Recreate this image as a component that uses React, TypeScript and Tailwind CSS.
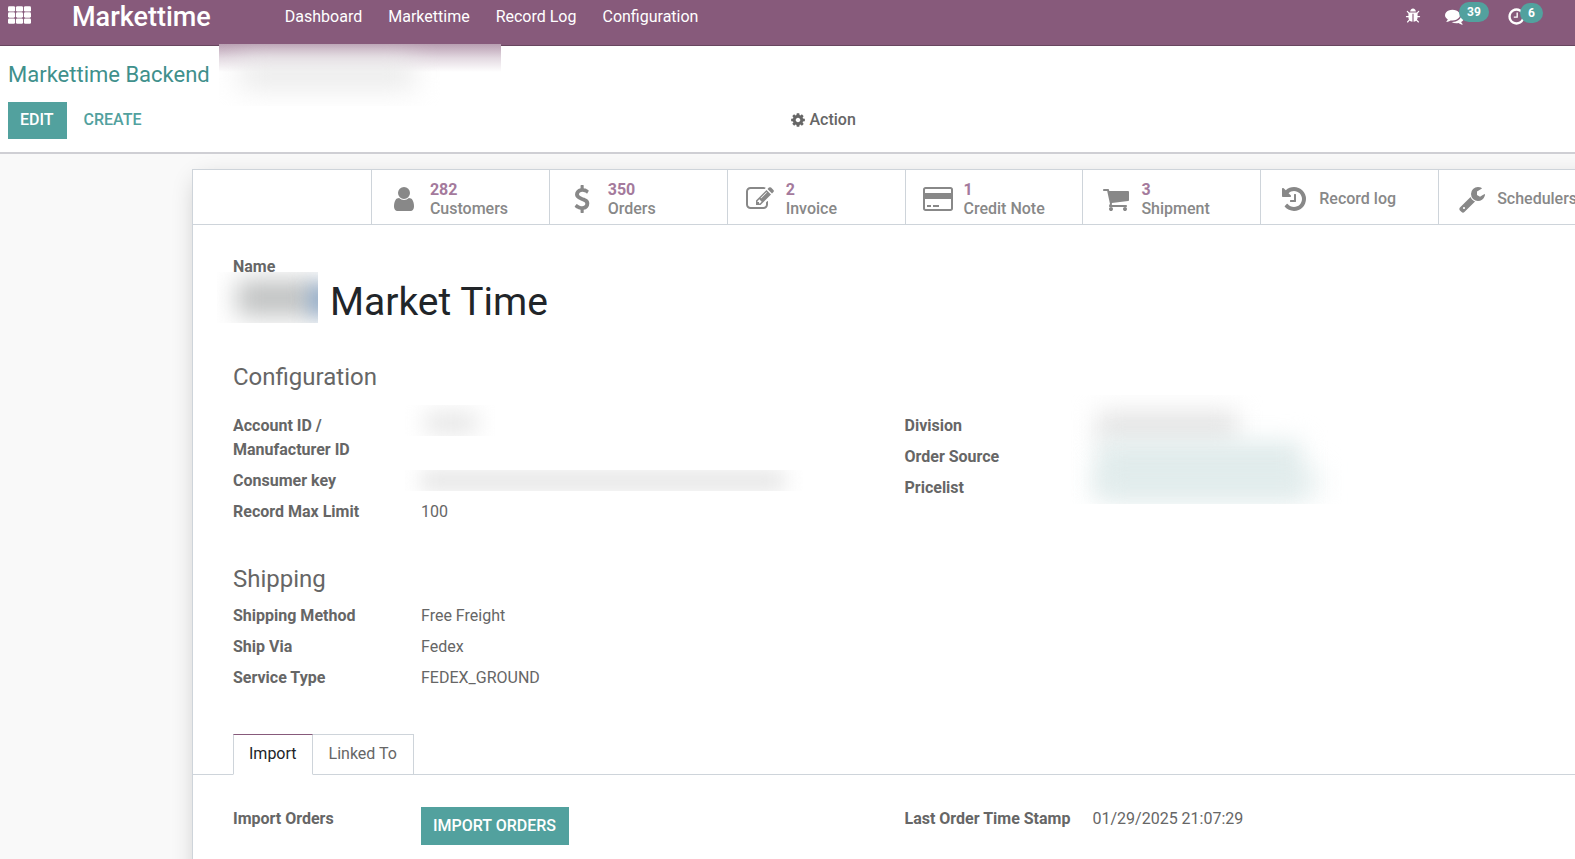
import type { ReactNode } from "react";

const ICONS = {
  user: "M1536 1399q0 109-62.5 187t-150.5 78h-854q-88 0-150.5-78t-62.5-187q0-85 8.5-160.5t31.5-152 58.5-131 94-89 134.5-34.5q131 128 313 128t313-128q76 0 134.5 34.5t94 89 58.5 131 31.5 152 8.5 160.5zm-256-887q0 159-112.5 271.5t-271.5 112.5-271.5-112.5-112.5-271.5 112.5-271.5 271.5-112.5 271.5 112.5 112.5 271.5z",
  usd: "M1362 1185q0 153-99.5 263.5t-258.5 136.5v175q0 14-9 23t-23 9h-135q-13 0-22.5-9.5t-9.5-22.5v-175q-66-9-127.5-31t-101.5-44.5-74-48-46.5-37.5-17.5-18q-17-21-2-41l103-135q7-10 23-12 15-2 24 9l2 2q113 99 243 125 37 8 74 8 81 0 142.5-43t61.5-122q0-28-15-53t-33.5-42-58.5-37.5-66-32-80-32.5q-39-16-61.5-25t-61.5-26.5-62.5-31-56.5-35.5-53.5-42.5-43.5-49-35.5-58-21-66.5-8.5-78q0-138 98-242t255-134v-180q0-13 9.5-22.5t22.5-9.5h135q14 0 23 9t9 23v176q57 6 110.5 23t87 33.5 63.5 37.5 39 29 15 14q17 18 5 38l-81 146q-8 15-23 16-14 3-27-7-3-3-14.5-12t-39-26.5-58.5-32-74.5-26-85.5-11.5q-95 0-155 43t-60 111q0 26 8.5 48t29.5 41.5 39.5 33 56 31 60.5 27 70 27.5q53 20 81 31.5t76 35 75.5 42.5 62 50 53 63.5 31.5 76.5 13 94z",
  edit: "M888 1184l116-116-152-152-116 116v56h96v96h56zm440-720q-16-16-33 1l-350 350q-17 17-1 33t33-1l350-350q17-17 1-33zm80 594v190q0 119-84.5 203.5t-203.5 84.5h-832q-119 0-203.5-84.5t-84.5-203.5v-832q0-119 84.5-203.5t203.5-84.5h832q63 0 117 25 15 7 18 23 3 17-9 29l-49 49q-14 14-32 8-23-6-45-6h-832q-66 0-113 47t-47 113v832q0 66 47 113t113 47h832q66 0 113-47t47-113v-126q0-13 9-22l64-64q15-15 35-7t20 29zm-96-738l288 288-672 672h-288v-288zm444 132l-92 92-288-288 92-92q28-28 68-28t68 28l152 152q28 28 28 68t-28 68z",
  card: "M1760 128q66 0 113 47t47 113v1216q0 66-47 113t-113 47h-1600q-66 0-113-47t-47-113v-1216q0-66 47-113t113-47h1600zm-1600 128q-13 0-22.5 9.5t-9.5 22.5v224h1664v-224q0-13-9.5-22.5t-22.5-9.5h-1600zm1600 1280q13 0 22.5-9.5t9.5-22.5v-608h-1664v608q0 13 9.5 22.5t22.5 9.5h1600zm-1504-128v-128h256v128h-256zm384 0v-128h384v128h-384z",
  cart: "M704 1536q0 52-38 90t-90 38-90-38-38-90 38-90 90-38 90 38 38 90zm896 0q0 52-38 90t-90 38-90-38-38-90 38-90 90-38 90 38 38 90zm128-1088v512q0 24-16.5 42.5t-40.5 21.5l-1044 122q13 60 13 70 0 16-24 64h920q26 0 45 19t19 45-19 45-45 19h-1024q-26 0-45-19t-19-45q0-11 8-31.5t16-36 21.5-40 15.5-29.5l-177-823h-204q-26 0-45-19t-19-45 19-45 45-19h256q16 0 28.5 6.5t19.5 15.5 13 24.5 8 26 5.5 29.5 4.5 26h1201q26 0 45 19t19 45z",
  history: "M1664 896q0 156-61 298t-164 245-245 164-298 61q-172 0-327-72.5t-264-204.5q-7-10-6.5-22.5t8.5-20.5l137-138q10-9 25-9 16 2 23 12 73 95 179 147t225 52q104 0 198.5-40.5t163.5-109.5 109.5-163.5 40.5-198.5-40.5-198.5-109.5-163.5-163.5-109.5-198.5-40.5q-98 0-188 35.5t-160 101.5l137 138q31 30 14 69-17 40-59 40h-448q-26 0-45-19t-19-45v-448q0-42 40-59 39-17 69 14l130 129q107-101 244.5-156.5t284.5-55.5q156 0 298 61t245 164 164 245 61 298zm-640-288v448q0 14-9 23t-23 9h-320q-14 0-23-9t-9-23v-64q0-14 9-23t23-9h224v-352q0-14 9-23t23-9h64q14 0 23 9t9 23z",
  wrench: "M448 1472q0-26-19-45t-45-19-45 19-19 45 19 45 45 19 45-19 19-45zm644-420l-682 682q-37 37-90 37-52 0-91-37l-106-108q-38-36-38-90 0-53 38-91l681-681q39 98 114.5 173.5t173.5 114.5zm634-435q0 39-23 106-47 134-164.5 217.5t-258.5 83.5q-185 0-316.5-131.5t-131.5-316.5 131.5-316.5 316.5-131.5q58 0 121.5 16.5t107.5 46.5q16 11 16 28t-16 28l-293 169v224l193 107q5-3 79-48.5t135.5-81 70.5-35.5q15 0 23.5 10t8.5 25z",
  bug: "M1696 960q0 26-19 45t-45 19h-224q0 171-67 290l208 209q19 19 19 45t-19 45q-18 19-45 19t-45-19l-198-197q-5 5-15 13t-42 28.5-65 36.5-82 29-97 13v-896h-128v896q-51 0-101.5-13.5t-87-33-66-39-43.5-32.5l-15-14-183 207q-20 21-48 21-24 0-43-16-19-18-20.5-44.5t15.5-46.5l202-227q-58-114-58-274h-224q-26 0-45-19t-19-45 19-45 45-19h224v-294l-173-173q-19-19-19-45t19-45 45-19 45 19l173 173h844l173-173q19-19 45-19t45 19 19 45-19 45l-173 173v294h224q26 0 45 19t19 45zm-480-576h-640q0-133 93.5-226.5t226.5-93.5 226.5 93.5 93.5 226.5z",
  comments: "M1408 768q0 139-94 257t-256.5 186.5-353.5 68.5q-86 0-176-16-124 88-278 128-36 9-86 16h-3q-11 0-20.5-8t-11.5-21q-1-3-1-6.5t.5-6.5 2-6l2.5-5 3.5-5.5 4-5 4.5-5 4-4.5q5-6 23-25t26-29.5 22.5-29 25-38.5 20.5-44q-124-72-195-177t-71-224q0-139 94-257t256.5-186.5 353.5-68.5 353.5 68.5 256.5 186.5 94 257zm384 256q0 120-71 224.5t-195 176.5q10 24 20.5 44t25 38.5 22.5 29 26 29.5 23 25q1 1 4 4.5t4.5 5 4 5 3.5 5.5l2.5 5 2 6 .5 6.5-1 6.5q-3 14-13 22t-22 7q-50-7-86-16-154-40-278-128-90 16-176 16-271 0-472-132 58 4 88 4 161 0 309-45t264-129q125-92 192-212t67-254q0-77-23-152 129 71 204 178t75 230z",
  clock: "M1024 544v448q0 14-9 23t-23 9h-320q-14 0-23-9t-9-23v-64q0-14 9-23t23-9h224v-352q0-14 9-23t23-9h64q14 0 23 9t9 23zm416 352q0-148-73-273t-198-198-273-73-273 73-198 198-73 273 73 273 198 198 273 73 273-73 198-198 73-273zm224 0q0 209-103 385.5t-279.5 279.5-385.5 103-385.5-103-279.5-279.5-103-385.5 103-385.5 279.5-279.5 385.5-103 385.5 103 279.5 279.5 103 385.5z",
  cog: "M1152 896q0-106-75-181t-181-75-181 75-75 181 75 181 181 75 181-75 75-181zm512-109v222q0 12-8 23t-20 13l-185 28q-19 54-39 91 35 50 107 138 10 12 10 25t-9 23q-27 37-99 108t-94 71q-12 0-26-9l-138-108q-44 23-91 38-16 136-29 186-7 28-36 28h-222q-14 0-24.5-8.5t-11.5-21.5l-28-184q-49-16-90-37l-141 107q-10 9-25 9-14 0-25-11-126-114-165-168-7-10-7-23 0-12 8-23 15-21 51-66.5t54-70.5q-27-50-41-99l-183-27q-13-2-21-12.5t-8-23.5v-222q0-12 8-23t19-13l186-28q14-46 39-92-40-57-107-138-10-12-10-24 0-10 9-23 26-36 98.5-107.5t94.5-71.5q13 0 26 10l138 107q44-23 91-38 16-136 29-186 7-28 36-28h222q14 0 24.5 8.5t11.5 21.5l28 184q49 16 90 37l142-107q9-9 24-9 13 0 25 10 129 119 165 170 7 8 7 22 0 12-8 23-15 21-51 66.5t-54 70.5q26 50 41 98l183 28q13 2 21 12.5t8 23.5z",
};

type IconName = keyof typeof ICONS;

function Icon({ name, className }: { name: IconName; className: string }) {
  return (
    <svg
      viewBox={name === "card" ? "0 0 1920 1792" : "0 0 1792 1792"}
      className={className}
      fill="currentColor"
      aria-hidden="true"
    >
      <path d={ICONS[name]} />
    </svg>
  );
}

function AppsIcon() {
  return (
    <svg viewBox="0 0 1664 1280" className="h-[18px] w-[23px]" fill="currentColor" aria-hidden="true">
      {[0, 448, 896].map((y) =>
        [0, 576, 1152].map((x) => <rect key={`${x}-${y}`} x={x} y={y} width="512" height="384" rx="96" />),
      )}
    </svg>
  );
}

function Counter({ children, className }: { children: ReactNode; className: string }) {
  return (
    <span
      className={`absolute top-0 flex h-5 items-center rounded-full bg-[#52a19e] px-2 text-[12px] font-bold ${className}`}
    >
      {children}
    </span>
  );
}

function Navbar() {
  return (
    <header className="flex h-[46px] items-start border-b border-[#68465f] bg-[#875a7b] text-white">
      <button type="button" aria-label="Apps" className="ml-2 flex h-[30px] items-center">
        <AppsIcon />
      </button>
      <a href="#home" className="ml-[41px] text-[27px] leading-[34px] font-medium">
        Markettime
      </a>
      <nav className="ml-[61px] flex">
        {["Dashboard", "Markettime", "Record Log", "Configuration"].map((item) => (
          <a key={item} href="#menu" className="px-[13px] text-[16px] leading-[33px]">
            {item}
          </a>
        ))}
      </nav>
      <div className="mr-8 ml-auto flex h-8 items-center">
        <button type="button" aria-label="Debug" className="mr-6">
          <Icon name="bug" className="size-4" />
        </button>
        <button type="button" aria-label="Messages" className="relative flex h-8 w-[62px] items-center">
          <Icon name="comments" className="size-[19px]" />
          <Counter className="left-[14px] mt-[2px]">39</Counter>
        </button>
        <button type="button" aria-label="Activities" className="relative flex h-8 w-9 items-center">
          <Icon name="clock" className="size-[19px]" />
          <Counter className="left-[13px] mt-[3px]">6</Counter>
        </button>
      </div>
    </header>
  );
}

function ControlPanel() {
  return (
    <div className="relative border-b-2 border-[#cfcfd4] bg-white px-2 pt-3 pb-[13px]">
      <div className="text-[22px] leading-[34px]">
        <a href="#backend" className="text-[#40908c]">
          Markettime Backend
        </a>
      </div>
      <div aria-hidden="true" className="absolute -top-0.5 left-[219px] h-[62px] w-[282px] overflow-hidden bg-white">
        <div className="h-7 bg-linear-to-b from-[#b99fb2] via-[#e3d9e1] to-white" />
        <div className="absolute top-4 left-5 h-7 w-[176px] bg-[#e9e9e9] blur-[14px]" />
      </div>
      <div className="mt-[10px] grid grid-cols-2">
        <div className="flex gap-[5px]">
          <button type="button" className="bg-[#52a19e] pt-[5px] pr-[13px] pb-[7px] pl-3 text-[16px] leading-[25px] font-medium text-white">
            EDIT
          </button>
          <button type="button" className="px-3 pt-[5px] pb-[7px] text-[16px] leading-[25px] font-medium text-[#52a19e]">
            CREATE
          </button>
        </div>
        <button
          type="button"
          className="ml-[2px] flex items-center gap-1 justify-self-start pb-[2px] text-[16px] leading-[25px] font-medium text-[#666666]"
        >
          <Icon name="cog" className="size-4" />
          Action
        </button>
      </div>
    </div>
  );
}

const STATS: { icon: IconName; label: string; value?: string }[] = [
  { icon: "user", label: "Customers", value: "282" },
  { icon: "usd", label: "Orders", value: "350" },
  { icon: "edit", label: "Invoice", value: "2" },
  { icon: "card", label: "Credit Note", value: "1" },
  { icon: "cart", label: "Shipment", value: "3" },
  { icon: "history", label: "Record log" },
  { icon: "wrench", label: "Schedulers" },
];

function StatBar() {
  return (
    <div className="grid grid-cols-8 border-b border-[#ced4da]">
      <div />
      {STATS.map(({ icon, label, value }) => (
        <button
          key={label}
          type="button"
          className="flex h-[54px] items-center border-l border-[#ced4da] pt-[3px] text-left text-[16px] leading-[19px] font-medium text-[#888888]"
        >
          <span className="flex w-[58px] justify-center pl-[7px]">
            <Icon name={icon} className={icon === "card" ? "h-7 w-[30px]" : "size-7"} />
          </span>
          <span>
            {value && <span className="block font-bold text-[#a47a9c]">{value}</span>}
            <span className="block whitespace-nowrap">{label}</span>
          </span>
        </button>
      ))}
    </div>
  );
}

function Field({ label, children }: { label: string; children?: ReactNode }) {
  return (
    <div className="flex min-h-[31px] text-[16px] leading-[24px]">
      <dt className="w-[188px] shrink-0 pr-5 pt-[3px] pb-1 font-bold">{label}</dt>
      <dd className="relative flex-1 pt-[3px]">{children}</dd>
    </div>
  );
}

function Sheet() {
  return (
    <main className="mt-[15px] ml-48 min-w-[1425px] border border-[#ced4da] bg-white shadow-[0_6px_24px_-6px_rgba(0,0,0,0.24)]">
      <StatBar />
      <div className="px-10 pt-[30px]">
        <div className="text-[16px] leading-[24px] font-bold">Name</div>
        <div className="flex items-start">
          <div aria-hidden="true" className="relative -mt-[7px] -ml-4 h-[51px] w-[101px] overflow-hidden bg-white">
            <div className="absolute top-2 left-5 h-9 w-20 bg-[#c0c2c2] blur-[12px]" />
            <div className="absolute top-3 -right-3 h-8 w-5 bg-[#7d9dc0] blur-[10px]" />
          </div>
          <h1 className="ml-3 text-[39px] leading-[47px] text-[#212529]">Market Time</h1>
        </div>

        <div className="mt-[35px] grid grid-cols-2">
          <section>
            <h2 className="text-[24px] leading-[32px]">Configuration</h2>
            <dl className="mt-[18px]">
              <Field label="Account ID / Manufacturer ID">
                <span aria-hidden="true" className="absolute -top-[6px] -left-4 h-[31px] w-[90px] overflow-hidden">
                  <span className="absolute top-2 left-5 h-5 w-[52px] bg-[#e4e4e4] blur-[11px]" />
                </span>
              </Field>
              <Field label="Consumer key">
                <span aria-hidden="true" className="absolute top-1 -left-4 h-[21px] w-[400px] overflow-hidden">
                  <span className="absolute top-0 left-4 h-[21px] w-[364px] bg-[#e5e5e5] blur-[10px]" />
                </span>
              </Field>
              <Field label="Record Max Limit">100</Field>
            </dl>
          </section>
          <section className="pt-[50px]">
            <dl>
              <Field label="Division">
                <span aria-hidden="true" className="absolute -top-4 -left-6 h-[109px] w-[280px] overflow-hidden">
                  <span className="absolute top-4 left-7 h-8 w-[140px] bg-[#e5e5e5] blur-[12px]" />
                  <span className="absolute top-[46px] left-7 h-14 w-[205px] bg-[#e1ecec] blur-[12px]" />
                  <span className="absolute top-[76px] left-7 h-6 w-[220px] bg-[#e1ecec] blur-[14px]" />
                </span>
              </Field>
              <Field label="Order Source" />
              <Field label="Pricelist" />
            </dl>
          </section>
        </div>

        <section className="mt-[35px]">
          <h2 className="text-[24px] leading-[32px]">Shipping</h2>
          <dl className="mt-[6px]">
            <Field label="Shipping Method">Free Freight</Field>
            <Field label="Ship Via">Fedex</Field>
            <Field label="Service Type">FEDEX_GROUND</Field>
          </dl>
        </section>
      </div>

      <div role="tablist" className="mt-10 flex border-b border-[#ced4da] pl-10 text-[16px] leading-[24px]">
        <button
          type="button"
          role="tab"
          aria-selected="true"
          className="-mb-px border border-t-[#875a7b] border-r-[#ced4da] border-b-white border-l-[#ced4da] bg-white px-[15px] pt-[7px] pb-2 text-[#212529]"
        >
          Import
        </button>
        <button
          type="button"
          role="tab"
          aria-selected="false"
          className="border-t border-r border-[#ced4da] px-4 pt-[7px] pb-2"
        >
          Linked To
        </button>
      </div>
      <div role="tabpanel" className="px-10 pt-[29px] pb-10">
        <dl className="grid grid-cols-2">
          <Field label="Import Orders">
            <button type="button" className="bg-[#52a19e] py-[7px] pr-[13px] pl-3 text-[16px] leading-[24px] font-medium text-white">
              IMPORT ORDERS
            </button>
          </Field>
          <Field label="Last Order Time Stamp">01/29/2025 21:07:29</Field>
        </dl>
      </div>
    </main>
  );
}

export default function App() {
  return (
    <div className="h-screen overflow-hidden bg-[#f9f9f9] font-['Roboto',sans-serif] text-[#666666]">
      <Navbar />
      <ControlPanel />
      <Sheet />
    </div>
  );
}
